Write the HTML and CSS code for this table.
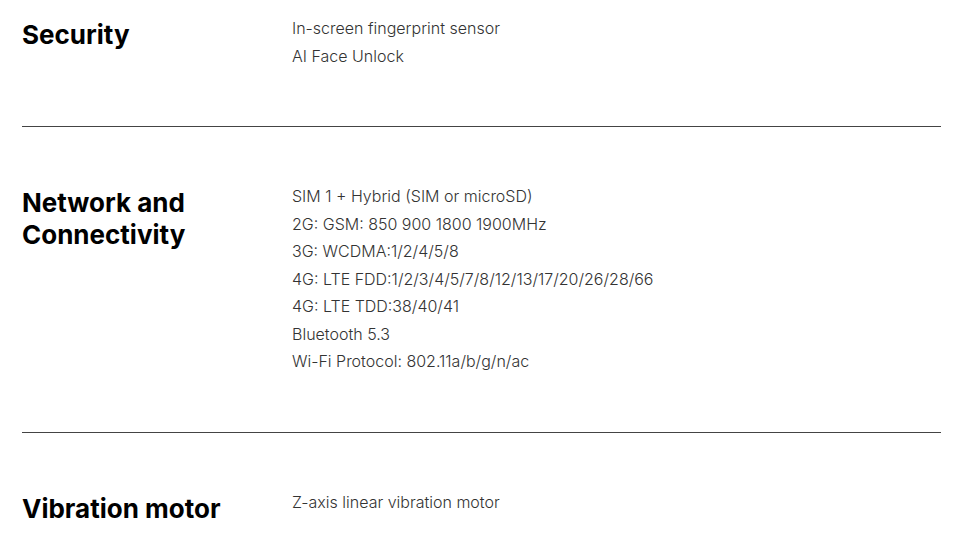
FILE: index.html
```html
<!DOCTYPE html>
<html lang="en">
<head>
<meta charset="utf-8">
<title>Specs</title>
<link rel="stylesheet" href="styles.css">
</head>
<body>
<main class="specs">
  <section class="spec spec-first">
    <h2 class="spec-title">Security</h2>
    <ul class="spec-list">
      <li>In-screen fingerprint sensor</li>
      <li>AI Face Unlock</li>
    </ul>
  </section>
  <section class="spec">
    <h2 class="spec-title">Network and<br>Connectivity</h2>
    <ul class="spec-list">
      <li>SIM 1 + Hybrid (SIM or microSD)</li>
      <li>2G: GSM: 850 900 1800 1900MHz</li>
      <li>3G: WCDMA:1/2/4/5/8</li>
      <li>4G: LTE FDD:1/2/3/4/5/7/8/12/13/17/20/26/28/66</li>
      <li>4G: LTE TDD:38/40/41</li>
      <li>Bluetooth 5.3</li>
      <li>Wi-Fi Protocol: 802.11a/b/g/n/ac</li>
    </ul>
  </section>
  <section class="spec">
    <h2 class="spec-title">Vibration motor</h2>
    <ul class="spec-list">
      <li>Z-axis linear vibration motor</li>
    </ul>
  </section>
</main>
</body>
</html>
```
FILE: styles.css
```css
html, body {
  margin: 0;
  padding: 0;
  background: #fff;
}
body {
  font-family: Inter, "Noto Sans", sans-serif;
  overflow: hidden;
}
.specs {
  padding: 0 25px 0 22px;
}
.spec {
  display: grid;
  grid-template-columns: 270px 1fr;
  padding: 56px 0 56px;
  border-top: 1px solid #444;
}
.spec-first {
  border-top: none;
  padding-top: 15px;
}
.spec-title {
  margin: 4px 0 0;
  font-size: 26px;
  line-height: 32px;
  font-weight: 700;
  color: #000;
}
.spec-list {
  list-style: none;
  margin: 0;
  padding: 0;
  font-size: 16px;
  line-height: 27.5px;
  font-weight: 300;
  color: #333;
}
```
